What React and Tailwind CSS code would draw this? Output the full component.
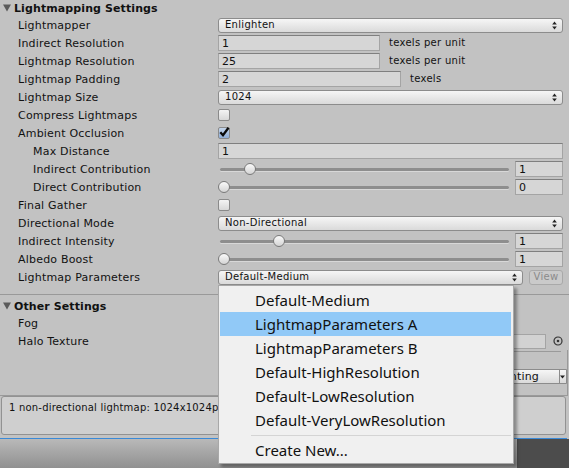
import React from "react";

const F = { fontFamily: '"DejaVu Sans", sans-serif' };

function Arrows() {
  return (
    <svg width="5" height="9" viewBox="0 0 5 9" className="shrink-0">
      <path d="M2.5 0.5 L4.8 3.5 L0.2 3.5 Z" fill="#222" />
      <path d="M2.5 8.5 L4.8 5.5 L0.2 5.5 Z" fill="#222" />
    </svg>
  );
}

function Popup({ value, className = "" }) {
  return (
    <div
      className={`flex h-[15px] items-center justify-between rounded-[3px] border border-[#8c8c8c] bg-gradient-to-b from-[#f6f6f6] to-[#dadada] pl-[6px] pr-[5px] text-[10px] tracking-[0.3px] text-[#111] ${className}`}
    >
      <span className="leading-none">{value}</span>
      <Arrows />
    </div>
  );
}

function Field({ value, className = "" }) {
  return (
    <div
      className={`flex h-[16px] items-center border border-[#a4a4a4] border-t-[#7f7f7f] bg-[#d6d6d6] pl-[3px] text-[11px] text-[#111] ${className}`}
    >
      <span className="leading-none">{value}</span>
    </div>
  );
}

function Check({ checked }) {
  return (
    <div
      className={`relative h-[12px] w-[12px] rounded-[2px] border border-[#8a8a8a] ${
        checked
          ? "bg-gradient-to-b from-[#c3d4ea] to-[#8fadd6]"
          : "bg-gradient-to-b from-[#f4f4f4] to-[#d8d8d8]"
      }`}
    >
      {checked && (
        <svg width="12" height="12" viewBox="0 0 12 12" className="absolute -left-px -top-[2px]">
          <path d="M2.3 6.2 L5 9.2 L10.5 1.8" stroke="#0a0a0a" strokeWidth="2.3" fill="none" />
        </svg>
      )}
    </div>
  );
}

function Slider({ pos, value }) {
  return (
    <div className="flex w-full items-center">
      <div className="relative h-[12px] w-[291px]">
        <div className="absolute left-[2px] right-0 top-[5px] h-[3px] rounded-full bg-[#8e8e8e] shadow-[0_1px_0_#d8d8d8]" />
        <div
          className="absolute top-0 h-[12px] w-[12px] rounded-full border border-[#7a7a7a] bg-gradient-to-b from-[#fafafa] to-[#d4d4d4]"
          style={{ left: pos }}
        />
      </div>
      <Field value={value} className="ml-[6px] w-[48px]" />
    </div>
  );
}

function Row({ label, indent, children }) {
  return (
    <div className="flex h-[18px] items-center">
      <div
        className={`w-[218px] shrink-0 ${indent ? "pl-[33px]" : "pl-[18px]"} leading-none tracking-[0.2px]`}
      >
        {label}
      </div>
      <div className="flex flex-1 items-center pr-[6px]">{children}</div>
    </div>
  );
}

function Header({ title }) {
  return (
    <div className="flex h-[16px] items-center pl-[3px]">
      <svg width="9" height="8" viewBox="0 0 9 8" className="mr-[2px]">
        <path d="M0 0.5 L8 0.5 L4 7.5 Z" fill="#5a5a5a" />
      </svg>
      <span className="text-[11px] font-bold leading-none tracking-[0.1px] text-[#111]">{title}</span>
    </div>
  );
}

export default function App() {
  const items = [
    "Default-Medium",
    "LightmapParameters A",
    "LightmapParameters B",
    "Default-HighResolution",
    "Default-LowResolution",
    "Default-VeryLowResolution",
  ];
  return (
    <div
      className="relative h-[468px] w-[569px] overflow-hidden bg-[#c2c2c2] text-[11px] text-[#111]"
      style={F}
    >
      <div className="flex flex-col">
        <Header title="Lightmapping Settings" />
        <Row label="Lightmapper">
          <Popup value="Enlighten" className="w-full" />
        </Row>
        <Row label="Indirect Resolution">
          <Field value="1" className="w-[162px]" />
          <span className="ml-[9px] text-[10px] leading-none tracking-[0.3px]">texels per unit</span>
        </Row>
        <Row label="Lightmap Resolution">
          <Field value="25" className="w-[162px]" />
          <span className="ml-[9px] text-[10px] leading-none tracking-[0.3px]">texels per unit</span>
        </Row>
        <Row label="Lightmap Padding">
          <Field value="2" className="w-[183px]" />
          <span className="ml-[9px] text-[10px] leading-none tracking-[0.3px]">texels</span>
        </Row>
        <Row label="Lightmap Size">
          <Popup value="1024" className="w-full" />
        </Row>
        <Row label="Compress Lightmaps">
          <Check />
        </Row>
        <Row label="Ambient Occlusion">
          <Check checked />
        </Row>
        <Row label="Max Distance" indent>
          <Field value="1" className="w-full" />
        </Row>
        <Row label="Indirect Contribution" indent>
          <Slider pos={26} value="1" />
        </Row>
        <Row label="Direct Contribution" indent>
          <Slider pos={0} value="0" />
        </Row>
        <Row label="Final Gather">
          <Check />
        </Row>
        <Row label="Directional Mode">
          <Popup value="Non-Directional" className="w-full" />
        </Row>
        <Row label="Indirect Intensity">
          <Slider pos={55} value="1" />
        </Row>
        <Row label="Albedo Boost">
          <Slider pos={0} value="1" />
        </Row>
        <Row label="Lightmap Parameters">
          <Popup value="Default-Medium" className="w-[305px]" />
          <div className="ml-[6px] flex h-[15px] w-[34px] items-center justify-center rounded-[3px] border border-[#a9a9a9] bg-[#cacaca] text-[10px] leading-none tracking-[0.3px] text-[#8a8a8a]">
            View
          </div>
        </Row>
        <div className="mt-[8px] h-px bg-[#999]" />
        <div className="mt-[3px]">
          <Header title="Other Settings" />
        </div>
        <Row label="Fog">
          <Check />
        </Row>
        <Row label="Halo Texture">
          <div className="flex w-full items-center">
            <div className="h-[15px] w-[328px] border border-[#a4a4a4] bg-[#d2d2d2]" />
            <svg width="10" height="10" viewBox="0 0 10 10" className="ml-[7px]">
              <circle cx="5" cy="5" r="4" stroke="#333" strokeWidth="1.2" fill="none" />
              <circle cx="5" cy="5" r="1.3" fill="#333" />
            </svg>
          </div>
        </Row>
        <div className="mr-[1px] flex h-[45px] border-r border-[#999]">
          <div className="flex flex-1 flex-col">
            <div className="ml-[513px] mt-[1px] h-px w-[48px] bg-[#9a9a9a]" />
            <div className="mt-[17px] flex justify-end">
              <div className="flex h-[15px] w-[200px] items-center rounded-l-[3px] border border-[#8c8c8c] bg-gradient-to-b from-[#f6f6f6] to-[#dadada] text-[11px]">
                <span className="flex-1 pr-[20px] text-right leading-none tracking-[0.2px]">Generate Lighting</span>
                <div className="h-full w-px bg-[#8c8c8c]" />
                <div className="w-[6px]">
                  <svg width="5" height="4" viewBox="0 0 5 4">
                    <path d="M0 0.5 L5 0.5 L2.5 3.5Z" fill="#222" />
                  </svg>
                </div>
              </div>
            </div>
          </div>
        </div>
        <div className="mr-[1px] h-px bg-[#9a9a9a]" />
        <div className="ml-px mr-[3px] h-[39px] rounded-[3px] border border-[#929292] bg-[#cfcfcf] pl-[7px] pt-[6px] text-[10px] leading-none tracking-[0.2px]">
          1 non-directional lightmap: 1024x1024px
        </div>
        <div className="mt-[3px] h-px w-[567px] bg-[#3a8ad8]" />
        <div className="flex h-[30px]">
          <div className="h-full flex-1 bg-gradient-to-b from-[#b9b9b9] to-[#8f8f8f]" />
          <div className="h-full w-[52px] bg-[#4c4c4c]" />
        </div>
      </div>

      <div
        className="absolute left-[218px] top-[285px] w-[296px] border border-[#a8a8a8] bg-[#f0f0f0] py-[2px] pl-px pr-[2px] shadow-[3px_3px_3px_rgba(0,0,0,0.35)]"
        style={{ fontFamily: '"Noto Sans", "Open Sans", sans-serif' }}
      >
        {items.map((t, i) => (
          <div
            key={t}
            className={`flex h-[24px] items-center pl-[35px] text-[15px] leading-none text-[#111] ${
              i === 1 ? "bg-[#91c9f7]" : ""
            }`}
          >
            {t}
          </div>
        ))}
        <div className="my-[3px] ml-[31px] h-px bg-[#d4d4d4]" />
        <div className="flex h-[22px] items-center pl-[35px] text-[15px] leading-none text-[#111]">
          Create New...
        </div>
      </div>
    </div>
  );
}
